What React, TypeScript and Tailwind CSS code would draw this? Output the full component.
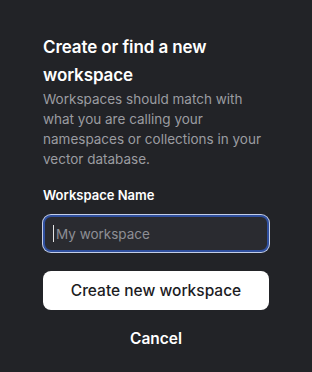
import React from "react";

export default function App() {
  return (
    <div
      className="w-[312px] h-[372px] bg-[#222327] flex justify-center"
      style={{ fontFamily: "Inter, 'Noto Sans', sans-serif" }}
    >
      <div className="w-[226px] pt-[33px] flex flex-col">
        <h1 className="text-[17px] leading-[28px] font-semibold text-white tracking-[-0.1px]">
          Create or find a new workspace
        </h1>
        <p className="text-[13.5px] leading-[20px] text-[#9b9ca1]">
          Workspaces should match with what you are calling your namespaces or
          collections in your vector database.
        </p>
        <label className="mt-[16px] text-[13px] leading-[20px] font-semibold text-white">
          Workspace Name
        </label>
        <div className="relative mt-[10px]">
          <input
            placeholder="My workspace"
            className="w-full h-[37px] rounded-[8px] border-2 border-[#2f4f9e] ring-1 ring-[#c3cde6] bg-[#2a2b30] pl-[11px] text-[13.5px] text-white placeholder:text-[#8e8f95] outline-none"
          />
          <span className="absolute left-[10px] top-[10px] w-px h-[17px] bg-[#e5e5e5]" />
        </div>
        <button className="mt-[19px] h-[39px] rounded-[8px] bg-white text-[#1c1c1f] text-[15.5px] font-medium">
          Create new workspace
        </button>
        <button className="mt-[17px] h-[24px] text-white text-[15.5px] font-semibold leading-[24px]">
          Cancel
        </button>
      </div>
    </div>
  );
}
